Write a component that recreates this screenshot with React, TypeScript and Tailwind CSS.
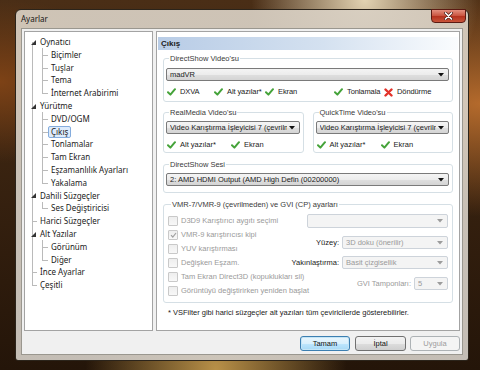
import React from 'react';

type TreeItem = {
  label: string;
  level: 0 | 1;
  expanded?: boolean;
  first?: boolean;
  last?: boolean;
  selected?: boolean;
};

const tree: TreeItem[] = [
  { label: 'Oynatıcı', level: 0, expanded: true, first: true },
  { label: 'Biçimler', level: 1 },
  { label: 'Tuşlar', level: 1 },
  { label: 'Tema', level: 1 },
  { label: 'İnternet Arabirimi', level: 1, last: true },
  { label: 'Yürütme', level: 0, expanded: true },
  { label: 'DVD/OGM', level: 1 },
  { label: 'Çıkış', level: 1, selected: true },
  { label: 'Tonlamalar', level: 1 },
  { label: 'Tam Ekran', level: 1 },
  { label: 'Eşzamanlılık Ayarları', level: 1 },
  { label: 'Yakalama', level: 1, last: true },
  { label: 'Dahili Süzgeçler', level: 0, expanded: true },
  { label: 'Ses Değiştiricisi', level: 1, last: true },
  { label: 'Harici Süzgeçler', level: 0 },
  { label: 'Alt Yazılar', level: 0, expanded: true },
  { label: 'Görünüm', level: 1 },
  { label: 'Diğer', level: 1, last: true },
  { label: 'İnce Ayarlar', level: 0 },
  { label: 'Çeşitli', level: 0, last: true },
];

const vmrOptions = [
  { label: 'D3D9 Karıştırıcı aygıtı seçimi' },
  { label: 'VMR-9 karıştırıcısı kipi', checked: true },
  { label: 'YUV karıştırması' },
  { label: 'Değişken Eşzam.' },
  { label: 'Tam Ekran Direct3D (kopuklukları sil)' },
  { label: 'Görüntüyü değiştirirken yeniden başlat' },
];

function TreeRow({ item }: { item: TreeItem }) {
  const line = 'absolute w-px bg-[#bababa]';
  return (
    <div className="flex items-center h-[12.8px]">
      <div className="relative h-full w-[9px] shrink-0">
        {item.level === 0 ? (
          <>
            {!item.first && <span className={`${line} left-[4px] top-0 h-1/2`} />}
            {!item.last && <span className={`${line} left-[4px] top-1/2 h-1/2`} />}
            {item.expanded ? (
              <svg width="5" height="5" viewBox="0 0 5 5" className="absolute left-[3px] top-[4px]">
                <path d="M5 0V5H0Z" fill="#333" />
              </svg>
            ) : (
              <span className="absolute left-[4px] top-1/2 w-[5px] h-px bg-[#bababa]" />
            )}
          </>
        ) : (
          <span className={`${line} left-[4px] top-0 h-full`} />
        )}
      </div>
      {item.level === 1 && (
        <div className="relative h-full w-[11px] shrink-0">
          <span className={`${line} left-[5px] top-0 h-1/2`} />
          {!item.last && <span className={`${line} left-[5px] top-1/2 h-1/2`} />}
          <span className="absolute left-[5px] top-1/2 w-[6px] h-px bg-[#bababa]" />
        </div>
      )}
      <span
        className={`px-[2px] border leading-[10px] whitespace-nowrap ${
          item.selected ? 'border-[#84acdd] bg-[#dcebfc] rounded-[2px]' : 'border-transparent'
        }`}
      >
        {item.label}
      </span>
    </div>
  );
}

function Arrow({ disabled }: { disabled?: boolean }) {
  return (
    <svg width="6" height="4" viewBox="0 0 6 4" className="shrink-0">
      <path d="M0 0H6L3 3.5Z" fill={disabled ? '#9c9c9c' : '#111'} />
    </svg>
  );
}

function Combo({ text, disabled, className = '' }: { text: string; disabled?: boolean; className?: string }) {
  return (
    <div
      className={`flex items-center gap-[2px] h-[13px] min-w-0 rounded-[2px] border pl-[3px] pr-[4px] ${
        disabled
          ? 'border-[#cdd3da] bg-[#f4f4f4] text-[#9a9a9a]'
          : 'border-[#7a7a7a] bg-[linear-gradient(#f4f4f4,#ececec_50%,#dfdfdf_51%,#d4d4d4)] text-[#1a1a1a]'
      } ${className}`}
    >
      <span className="flex-1 min-w-0 whitespace-nowrap overflow-hidden leading-[10px]">{text}</span>
      <Arrow disabled={disabled} />
    </div>
  );
}

function Tick() {
  return (
    <svg width="9" height="8" viewBox="0 0 9 8" className="shrink-0">
      <path d="M1 4.2L3.4 6.6L8 1.2" fill="none" stroke="#45a33a" strokeWidth="2" strokeLinecap="round" strokeLinejoin="round" />
    </svg>
  );
}

function Cross() {
  return (
    <svg width="9" height="9" viewBox="0 0 9 9" className="shrink-0">
      <path d="M1.5 1.5L7.5 7.5M7.5 1.5L1.5 7.5" stroke="#e2322a" strokeWidth="2.4" strokeLinecap="round" />
    </svg>
  );
}

function Check({ label, ok = true, className = '' }: { label: string; ok?: boolean; className?: string }) {
  return (
    <div className={`flex items-center shrink-0 ${className}`}>
      {ok ? <Tick /> : <Cross />}
      <span className="ml-[4px] whitespace-nowrap">{label}</span>
    </div>
  );
}

function Group({ title, className = '', children }: { title: string; className?: string; children: React.ReactNode }) {
  return (
    <fieldset className={`border border-[#d5dfe5] rounded-[3px] min-w-0 ${className}`}>
      <legend className="ml-[3px] px-[1px] leading-[9px] text-[#3a3a3a] whitespace-nowrap">{title}</legend>
      {children}
    </fieldset>
  );
}

export default function App() {
  return (
    <div className="w-[480px] h-[370px] overflow-hidden pt-[9px] pl-[15px] bg-[radial-gradient(ellipse_at_76%_0%,#e3d3b2_0%,transparent_22%),radial-gradient(ellipse_at_100%_28%,#b46a2c_0%,transparent_30%),radial-gradient(ellipse_at_0%_22%,#7d4216_0%,transparent_20%),radial-gradient(ellipse_at_45%_100%,#b89048_0%,transparent_35%),linear-gradient(#4a2e16,#241509)]">
      <div className="w-[454px] h-[352px] flex flex-col rounded-t-[6px] rounded-b-[3px] border border-[#2b241b] bg-[linear-gradient(rgba(216,207,194,0.93),rgba(206,200,192,0.94))] px-[5px] pb-[5px]">
        {/* Title bar */}
        <div className="h-[18px] flex items-start justify-between">
          <span className="mt-[4px] leading-[10px] text-[8px] text-[#151515] font-['Noto_Sans',sans-serif]">Ayarlar</span>
          <div className="-mr-[3px] -mt-[1px] w-[35px] h-[14px] rounded-b-[4px] border border-[#5a1a12] bg-[linear-gradient(#e4907f,#c9523d_50%,#b4311d_51%,#c9543a)] flex items-center justify-center">
            <svg width="9" height="8" viewBox="0 0 9 8">
              <path d="M1.5 1L7.5 7M7.5 1L1.5 7" stroke="#4a1a12" strokeWidth="3" strokeLinecap="round" />
              <path d="M1.5 1L7.5 7M7.5 1L1.5 7" stroke="#fff" strokeWidth="1.7" strokeLinecap="round" />
            </svg>
          </div>
        </div>

        {/* Client area */}
        <div className="flex-1 min-h-0 bg-[#f0f0f0] border border-[#9a978f] p-[2px] flex flex-col">
          <div className="flex gap-[3px] h-[300px]">
            {/* Tree */}
            <div className="w-[129px] shrink-0 bg-white border border-[#a3a3a3] pl-[3px] pt-[3.6px] font-['Noto_Sans',sans-serif] text-[8px] text-[#1a1a1a]">
              {tree.map((item) => (
                <TreeRow key={item.label} item={item} />
              ))}
            </div>

            {/* Page */}
            <div className="flex-1 min-w-0 overflow-hidden bg-white border border-[#a3a3a3] flex flex-col font-['Liberation_Sans',Arial,sans-serif] text-[7.5px] text-[#1a1a1a]">
              <div className="mx-[1px] mt-[5px] h-[13px] shrink-0 flex items-center pl-[3px] font-bold text-[8px] bg-[linear-gradient(90deg,#b8cce6,#d4e1f0_55%,#fafcfe)]">
                Çıkış
              </div>

              <Group title="DirectShow Video'su" className="mx-[6px] mt-[4px] pl-[2px] pr-[3px] pb-[4px]">
                <Combo text="madVR" className="mt-[5px]" />
                <div className="flex mt-[6px] h-[10px] pl-[1px] tracking-[-0.1px]">
                  <Check label="DXVA" className="w-[47px]" />
                  <Check label="Alt yazılar*" className="w-[51px]" />
                  <Check label="Ekran" className="w-[46px]" />
                  <Check label="Tonlamala" className="ml-[23px] w-[50px]" />
                  <Check label="Döndürme" ok={false} />
                </div>
              </Group>

              <div className="flex gap-[9px] mx-[6px] mt-[6px]">
                {["RealMedia Video'su", "QuickTime Video'su"].map((t) => (
                  <Group key={t} title={t} className="flex-1 pl-[2px] pr-[3px] pb-[2px]">
                    <Combo text="Video Karıştırma İşleyicisi 7 (çevrilmeden)" className="mt-[4px]" />
                    <div className="flex mt-[6px] h-[10px] pl-[1px]">
                      <Check label="Alt yazılar*" className="w-[64px]" />
                      <Check label="Ekran" />
                    </div>
                  </Group>
                ))}
              </div>

              <Group title="DirectShow Sesi" className="mx-[6px] mt-[7px] pl-[2px] pr-[3px] pb-[6px]">
                <Combo text="2: AMD HDMI Output (AMD High Defin (00200000)" className="mt-[4px]" />
              </Group>

              <Group title="VMR-7/VMR-9 (çevrilmeden) ve GVI (CP) ayarları" className="mx-[6px] mt-[7px] px-[4px] pb-[4px]">
                <div className="flex mt-[5px]">
                  <div className="w-[139px] shrink-0 flex flex-col">
                    {vmrOptions.map((o) => (
                      <div key={o.label} className="flex items-center h-[14px] text-[#9a9a9a] whitespace-nowrap">
                        <span className="w-[10px] h-[10px] shrink-0 border border-[#c9c9c9] bg-[linear-gradient(#eeeeee,#f8f8f8)] rounded-[1px] flex items-center justify-center">
                          {o.checked && (
                            <svg width="7" height="6" viewBox="0 0 7 6">
                              <path d="M1 3.2L2.8 5L6 1" fill="none" stroke="#a0a0a0" strokeWidth="1.2" />
                            </svg>
                          )}
                        </span>
                        <span className="ml-[3px]">{o.label}</span>
                      </div>
                    ))}
                  </div>
                  <div className="flex-1 min-w-0 flex flex-col">
                    <Combo text="" disabled className="h-[14px]" />
                    <div className="flex items-center justify-end mt-[8px]">
                      <span className="mr-[3px] whitespace-nowrap">Yüzey:</span>
                      <Combo text="3D doku (önerilir)" disabled className="w-[106px] shrink-0" />
                    </div>
                    <div className="flex items-center justify-end mt-[7px]">
                      <span className="mr-[3px] whitespace-nowrap">Yakınlaştırma:</span>
                      <Combo text="Basit çizgisellik" disabled className="w-[106px] shrink-0" />
                    </div>
                    <div className="flex items-center justify-end mt-[8px]">
                      <span className="mr-[3px] whitespace-nowrap text-[#9a9a9a]">GVI Tamponları:</span>
                      <Combo text="5" disabled className="w-[34px] shrink-0" />
                    </div>
                  </div>
                </div>
              </Group>

              <p className="ml-[11px] mt-[5px] leading-[10px] whitespace-nowrap">
                * VSFilter gibi harici süzgeçler alt yazıları tüm çeviricilerde gösterebilirler.
              </p>
            </div>
          </div>

          {/* Buttons */}
          <div className="flex justify-end mt-[5px] font-['Liberation_Sans',Arial,sans-serif] text-[7.5px]">
            <button className="w-[50px] h-[15px] rounded-[3px] border border-[#3c7fb1] bg-[linear-gradient(#eaf6fd,#d9f0fc_50%,#bee6fd_51%,#a7d9f5)] shadow-[inset_0_0_0_1px_#c4e5f6] text-[#111]">
              Tamam
            </button>
            <button className="ml-[5px] w-[51px] h-[15px] rounded-[3px] border border-[#707070] bg-[linear-gradient(#f2f2f2,#ebebeb_50%,#dddddd_51%,#cfcfcf)] text-[#111]">
              İptal
            </button>
            <button className="ml-[4px] w-[50px] h-[15px] rounded-[3px] border border-[#adb2b5] bg-[#f4f4f4] text-[#9c9c9c]">
              Uygula
            </button>
          </div>
        </div>
      </div>
    </div>
  );
}
